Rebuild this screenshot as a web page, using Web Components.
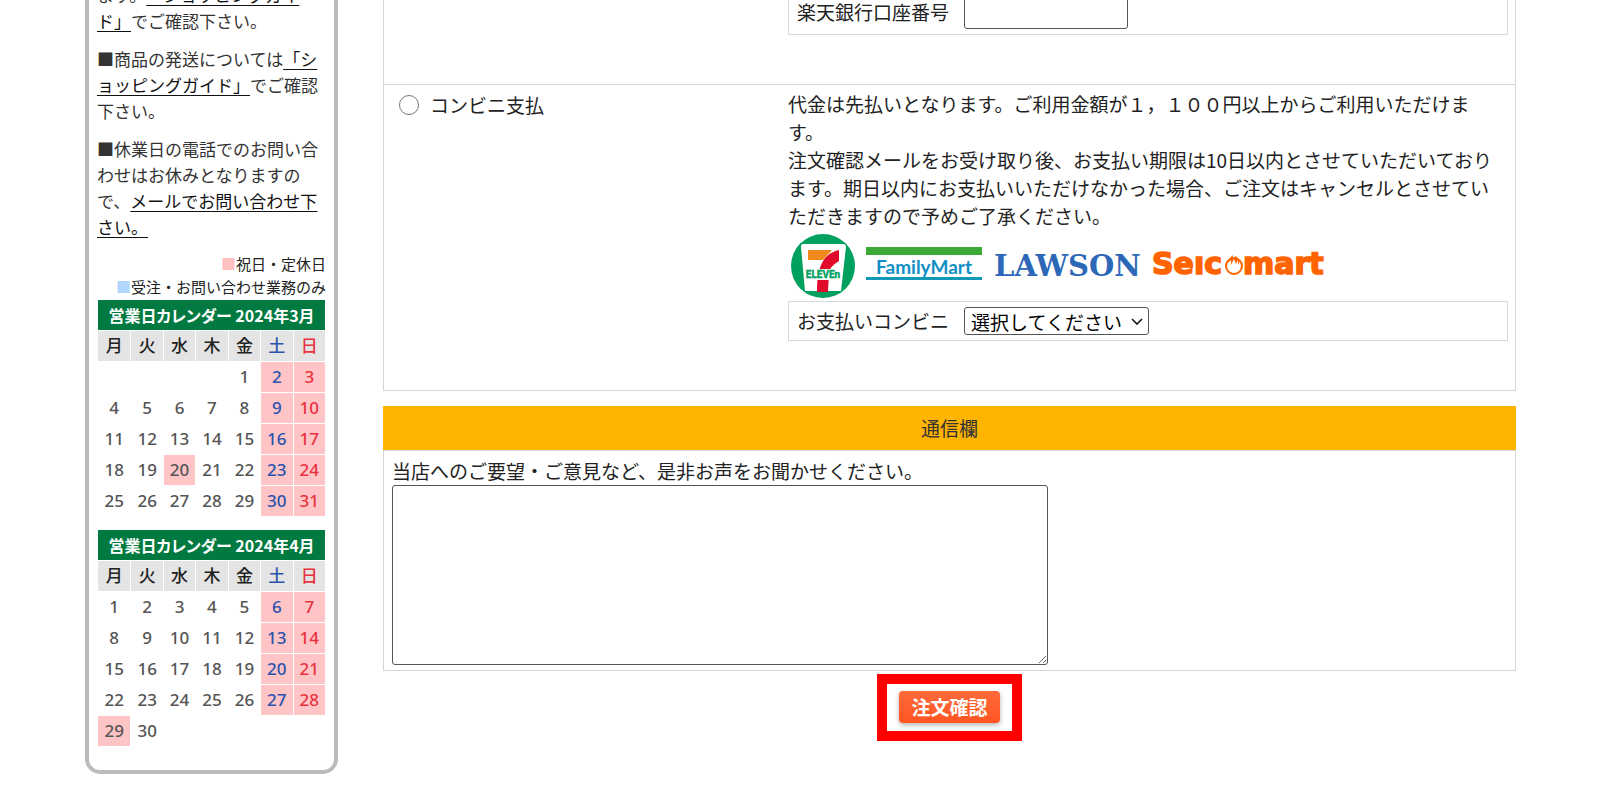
<!DOCTYPE html>
<html lang="ja">
<head>
<meta charset="utf-8">
<title>ご注文手続き</title>
<style>
  body {
    background: #fff;
    color: #222;
    font-family: "Noto Sans CJK JP", "Liberation Sans", sans-serif;
    font-size: 19px;
    line-height: 28px;
    margin: 0;
    overflow-x: hidden;
    text-spacing-trim: space-all;
  }
</style>
</head>
<body>
<order-page></order-page>

<script>
class ShopSidebar extends HTMLElement {
  constructor() {
    super()
    this.attachShadow({ mode: "open" })
  }

  connectedCallback() {
    this.shadowRoot.innerHTML = `
      <style>
        :host {
          border: 4px solid #bbb;
          border-radius: 0 0 15px 15px;
          border-top: 0;
          box-sizing: border-box;
          display: block;
          font-size: 17px;
          line-height: 26px;
          padding: 0 8px 24px;
        }
        p {
          color: #333;
          margin: 0 0 12px;
        }
        a {
          color: #111;
          text-underline-offset: 3px;
        }
        ul {
          font-size: 15px;
          line-height: 23px;
          list-style: none;
          margin: 0;
          padding: 0 0 2px;
          text-align: right;
        }
        .closed { color: #ffc0c2; }
        .orders { color: #b0d8ff; }
        .calendars {
          display: flex;
          flex-direction: column;
          gap: 14px;
          padding: 0 1px;
        }
      </style>
      <p>ます。<a href="#guide">「ショッピングガイド」</a>でご確認下さい。</p>
      <p>■商品の発送については<a href="#guide">「ショッピングガイド」</a>でご確認下さい。</p>
      <p>■休業日の電話でのお問い合わせはお休みとなりますので、<a href="#mail">メールでお問い合わせ下さい。</a></p>
      <ul>
        <li><span class="closed">■</span>祝日・定休日</li>
        <li><span class="orders">■</span>受注・お問い合わせ業務のみ</li>
      </ul>
      <div class="calendars">
        <month-calendar year="2024" month="3" holidays="20"></month-calendar>
        <month-calendar year="2024" month="4" holidays="29"></month-calendar>
      </div>
    `
  }
}

class MonthCalendar extends HTMLElement {
  constructor() {
    super()
    this.attachShadow({ mode: "open" })
  }

  connectedCallback() {
    const year = Number(this.getAttribute("year"))
    const month = Number(this.getAttribute("month"))
    const holidays = (this.getAttribute("holidays") || "").split(",").map(Number)
    const names = ["月", "火", "水", "木", "金", "土", "日"]
    // weeks start on Monday
    const offset = (new Date(year, month - 1, 1).getDay() + 6) % 7
    const last = new Date(year, month, 0).getDate()
    let rows = ""
    for (let start = 1 - offset; start <= last; start += 7) {
      rows += "<tr>"
      for (let i = 0; i < 7; i++) {
        const day = start + i
        if (day < 1 || day > last) {
          rows += "<td></td>"
        } else {
          const off = i > 4 || holidays.includes(day)
          rows += `<td class="${off ? "off" : ""}">${day}</td>`
        }
      }
      rows += "</tr>"
    }
    this.shadowRoot.innerHTML = `
      <style>
        :host { display: block; }
        table {
          border-collapse: separate;
          border-spacing: 0;
          color: #555;
          font-family: "Noto Sans", "Noto Sans CJK JP", sans-serif;
          font-size: 17px;
          font-weight: 500;
          line-height: 30px;
          table-layout: fixed;
          text-align: center;
          width: 100%;
        }
        caption {
          background: #007a40;
          color: #fff;
          font-family: "Noto Sans CJK JP", sans-serif;
          font-feature-settings: "palt";
          font-size: 16px;
          font-weight: 700;
          white-space: nowrap;
        }
        th, td {
          border-left: 1px solid #fff;
          border-top: 1px solid #fff;
          height: 30px;
          padding: 0;
        }
        th:first-child, td:first-child { border-left: 0; }
        th {
          background: #e4e4e4;
          color: #222;
          font-weight: 500;
        }
        .off { background: #ffc4c6; }
        tr > :nth-child(6) { color: #2b53ad; }
        tr > :nth-child(7) { color: #e8333f; }
      </style>
      <table>
        <caption>営業日カレンダー ${year}年${month}月</caption>
        <thead><tr>${names.map(n => `<th scope="col">${n}</th>`).join("")}</tr></thead>
        <tbody>${rows}</tbody>
      </table>
    `
  }
}

class PaymentField extends HTMLElement {
  constructor() {
    super()
    this.attachShadow({ mode: "open" })
  }

  connectedCallback() {
    const control = this.getAttribute("type") === "select"
      ? `<span class="select">
          <select id="field"><option>${this.getAttribute("placeholder")}</option></select>
          <svg width="12" height="7" viewBox="0 0 12 7" aria-hidden="true">
            <path d="M1 1L6 6L11 1" fill="none" stroke="#111" stroke-width="1.6"/>
          </svg>
        </span>`
      : `<input id="field" type="text">`
    this.shadowRoot.innerHTML = `
      <style>
        :host {
          align-items: center;
          border: 1px solid #d6d6d6;
          box-sizing: border-box;
          display: flex;
          gap: 15px;
          min-height: 40px;
          padding: 5px 8px;
        }
        input, select {
          background: #fff;
          border: 1px solid #555;
          border-radius: 3px;
          box-sizing: border-box;
          color: #000;
          font: inherit;
        }
        input {
          height: 34px;
          width: 164px;
        }
        .select {
          align-items: center;
          display: grid;
        }
        select {
          appearance: none;
          height: 28px;
          padding: 0 24px 0 6px;
        }
        select, svg { grid-area: 1 / 1; }
        svg {
          justify-self: end;
          margin-right: 6px;
          pointer-events: none;
        }
      </style>
      <label for="field">${this.getAttribute("label")}</label>
      ${control}
    `
  }
}

class PaymentOption extends HTMLElement {
  constructor() {
    super()
    this.attachShadow({ mode: "open" })
  }

  connectedCallback() {
    const name = this.getAttribute("name")
    this.shadowRoot.innerHTML = `
      <style>
        :host {
          border: 1px solid #d6d6d6;
          border-top: 0;
          display: grid;
          grid-template-columns: 404px 1fr;
          padding-bottom: 49px;
        }
        .choice {
          align-items: center;
          align-self: start;
          display: flex;
          gap: 11px;
          padding: 6px 0 0 15px;
        }
        input {
          height: 20px;
          margin: 0;
          width: 20px;
        }
        .detail { padding-right: 7px; }
      </style>
      ${name ? `
        <div class="choice">
          <input type="radio" id="choice">
          <label for="choice">${name}</label>
        </div>` : "<div></div>"}
      <div class="detail"><slot></slot></div>
    `
  }
}

class StoreLogos extends HTMLElement {
  constructor() {
    super()
    this.attachShadow({ mode: "open" })
  }

  connectedCallback() {
    this.shadowRoot.innerHTML = `
      <style>
        :host {
          display: flex;
          height: 71px;
        }
      </style>
      <svg width="545" height="71" viewBox="0 0 545 71" role="img" aria-label="取扱コンビニ">
        <circle cx="35" cy="36" r="32" fill="#00a05f"/>
        <path d="M15 14H55Q58 14 58 17L53 61H17L13 17Q13 14 15 14Z" fill="#fff"/>
        <path d="M20 20H44L35 30H20Z" fill="#f08a1c"/>
        <path d="M51 20V31C45 35 42 38 41 42L40 62H29C29 50 30 41 34 33C37 27 42 22 51 20Z" fill="#e00b2c"/>
        <rect x="18" y="39" width="35" height="11" fill="#fff"/>
        <text x="35" y="48" text-anchor="middle" font-family="Liberation Sans Narrow, Roboto, sans-serif" font-size="10" font-weight="700" fill="#00a05f" stroke="#00a05f" stroke-width=".4">ELEVEn</text>

        <rect x="78" y="17" width="116" height="8" fill="#3ca935"/>
        <rect x="78" y="47" width="116" height="3" fill="#1498b8"/>
        <text x="136" y="44" text-anchor="middle" font-family="Lato, sans-serif" font-size="19" font-weight="700" fill="#118fc4">FamilyMart</text>

        <text x="206" y="46" font-family="DejaVu Serif, serif" font-size="29" font-weight="700" fill="#2d68b8">LAWSON</text>

        <g font-family="DejaVu Sans, sans-serif" font-size="30" font-weight="700" fill="#ff6400" stroke="#ff6400" stroke-width="1.6">
          <text x="364" y="44">Seıc</text>
          <text x="455" y="44">mart</text>
        </g>
        <circle cx="446" cy="36" r="8" fill="none" stroke="#ff6400" stroke-width="2"/>
        <path d="M440 33C440 29 443 27 445 25C444 29 446 29 447 26C451 28 453 32 450 35V30L448 34L446 29L443 35V30Z" fill="#ff6400"/>
      </svg>
    `
  }
}

class OrderRemarks extends HTMLElement {
  constructor() {
    super()
    this.attachShadow({ mode: "open" })
  }

  connectedCallback() {
    this.shadowRoot.innerHTML = `
      <style>
        :host {
          border: 1px solid #d6d6d6;
          border-top: 0;
          display: block;
        }
        h2 {
          background: #ffb400;
          border-bottom: 1px solid #d6d6d6;
          color: #333;
          font-size: 19px;
          font-weight: 400;
          line-height: 44px;
          margin: 0 -1px;
          text-align: center;
        }
        .body {
          display: flex;
          flex-direction: column;
          padding: 6px 8px 5px;
        }
        textarea {
          border: 1px solid #555;
          border-radius: 3px;
          box-sizing: border-box;
          font: inherit;
          height: 180px;
          max-width: 100%;
          width: 656px;
        }
      </style>
      <h2>通信欄</h2>
      <div class="body">
        <label for="remarks">当店へのご要望・ご意見など、是非お声をお聞かせください。</label>
        <textarea id="remarks"></textarea>
      </div>
    `
  }
}

class ConfirmButton extends HTMLElement {
  constructor() {
    super()
    this.attachShadow({ mode: "open" })
  }

  connectedCallback() {
    this.shadowRoot.innerHTML = `
      <style>
        :host {
          border: 10px solid #f00;
          display: block;
          padding: 7px 12px 8px;
        }
        button {
          background: linear-gradient(#ff6a3a, #ff5522);
          border: 0;
          border-radius: 4px;
          box-shadow: 0 2px 5px rgba(0, 0, 0, .3);
          color: #fff;
          cursor: pointer;
          display: block;
          font: inherit;
          font-weight: 700;
          height: 32px;
          line-height: 32px;
          padding: 0 12px;
        }
      </style>
      <button type="button"><slot></slot></button>
    `
  }
}

class OrderPage extends HTMLElement {
  constructor() {
    super()
    this.attachShadow({ mode: "open" })
  }

  connectedCallback() {
    this.shadowRoot.innerHTML = `
      <style>
        :host {
          align-items: flex-start;
          display: flex;
          gap: 45px;
          padding: 0 84px 0 85px;
        }
        shop-sidebar {
          flex: none;
          margin-top: -18px;
          width: 253px;
        }
        main {
          flex: 1;
          margin-top: -11px;
          min-width: 0;
        }
        p {
          margin: 0;
          padding: 5px 10px 0 0;
        }
        order-remarks { margin-top: 15px; }
        .actions {
          display: flex;
          justify-content: center;
          padding-top: 3px;
        }
      </style>
      <shop-sidebar></shop-sidebar>
      <main>
        <payment-option>
          <payment-field type="text" label="楽天銀行口座番号"></payment-field>
        </payment-option>
        <payment-option name="コンビニ支払">
          <p>代金は先払いとなります。ご利用金額が１，１００円以上からご利用いただけます。<br>注文確認メールをお受け取り後、お支払い期限は10日以内とさせていただいております。期日以内にお支払いいただけなかった場合、ご注文はキャンセルとさせていただきますので予めご了承ください。</p>
          <store-logos></store-logos>
          <payment-field type="select" label="お支払いコンビニ" placeholder="選択してください"></payment-field>
        </payment-option>
        <order-remarks></order-remarks>
        <div class="actions"><confirm-button>注文確認</confirm-button></div>
      </main>
    `
  }
}

window.customElements.define("month-calendar", MonthCalendar)
window.customElements.define("shop-sidebar", ShopSidebar)
window.customElements.define("payment-field", PaymentField)
window.customElements.define("payment-option", PaymentOption)
window.customElements.define("store-logos", StoreLogos)
window.customElements.define("order-remarks", OrderRemarks)
window.customElements.define("confirm-button", ConfirmButton)
window.customElements.define("order-page", OrderPage)
</script>
</body>
</html>
